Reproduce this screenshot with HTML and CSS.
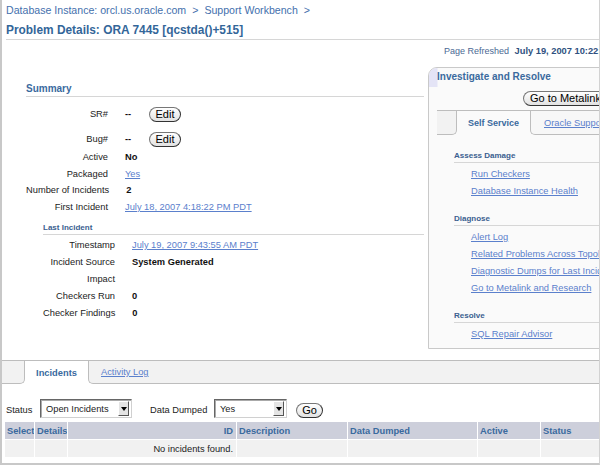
FILE: index.html
```html
<!DOCTYPE html>
<html lang="en">
<head>
<meta charset="utf-8">
<title>Problem Details</title>
<link rel="stylesheet" href="styles.css">
</head>
<body>
<div class="frame">
  <div class="crumbs"><a class="crumb">Database Instance: orcl.us.oracle.com</a><span class="sep">&gt;</span><a class="crumb">Support Workbench</a><span class="sep">&gt;</span></div>
  <h1 class="title">Problem Details: ORA 7445 [qcstda()+515]</h1>

  <div class="main">
    <div class="left">
      <h2 class="sec-head">Summary</h2>
      <div class="rows">
        <div class="row btnrow"><span class="lbl">SR#</span><span class="val dash">--</span><button class="pill edit">Edit</button></div>
        <div class="row btnrow"><span class="lbl">Bug#</span><span class="val dash">--</span><button class="pill edit">Edit</button></div>
        <div class="row"><span class="lbl">Active</span><span class="val">No</span></div>
        <div class="row"><span class="lbl">Packaged</span><a class="val link">Yes</a></div>
        <div class="row"><span class="lbl">Number of Incidents</span><span class="val">2</span></div>
        <div class="row"><span class="lbl">First Incident</span><a class="val link">July 18, 2007 4:18:22 PM PDT</a></div>
      </div>
      <div class="last">
        <h3 class="sub-head">Last Incident</h3>
        <div class="rows2">
          <div class="row2"><span class="lbl2">Timestamp</span><a class="val link">July 19, 2007 9:43:55 AM PDT</a></div>
          <div class="row2"><span class="lbl2">Incident Source</span><span class="val">System Generated</span></div>
          <div class="row2"><span class="lbl2">Impact</span><span class="val"></span></div>
          <div class="row2"><span class="lbl2">Checkers Run</span><span class="val">0</span></div>
          <div class="row2"><span class="lbl2">Checker Findings</span><span class="val">0</span></div>
        </div>
      </div>
    </div>

    <div class="right">
      <div class="refreshed">Page Refreshed <b>July 19, 2007 10:22:53 AM PDT</b></div>
      <div class="panel">
        <div class="panel-head">Investigate and Resolve</div>
        <div class="panel-btn"><button class="pill metalink">Go to Metalink</button></div>
        <div class="tabs ptabs">
          <div class="tab-gap"></div>
          <div class="tab-on">Self Service</div>
          <div class="tab-rest"><a class="link">Oracle Support</a></div>
        </div>
        <div class="panel-body">
          <div class="psec">
            <h4 class="sub-head">Assess Damage</h4>
            <ul class="plinks">
              <li><a class="link">Run Checkers</a></li>
              <li><a class="link">Database Instance Health</a></li>
            </ul>
          </div>
          <div class="psec">
            <h4 class="sub-head">Diagnose</h4>
            <ul class="plinks">
              <li><a class="link">Alert Log</a></li>
              <li><a class="link">Related Problems Across Topology</a></li>
              <li><a class="link">Diagnostic Dumps for Last Incident</a></li>
              <li><a class="link">Go to Metalink and Research</a></li>
            </ul>
          </div>
          <div class="psec">
            <h4 class="sub-head">Resolve</h4>
            <ul class="plinks">
              <li><a class="link">SQL Repair Advisor</a></li>
            </ul>
          </div>
        </div>
      </div>
    </div>
  </div>

  <div class="tabs btabs">
    <div class="tab-gap"></div>
    <div class="tab-on">Incidents</div>
    <div class="tab-rest"><a class="link">Activity Log</a></div>
  </div>

  <div class="filters">
    <span class="flbl status">Status</span>
    <div class="sel sel-status"><span class="sel-text">Open Incidents</span><span class="sel-arrow"></span></div>
    <span class="flbl dumped">Data Dumped</span>
    <div class="sel sel-dumped"><span class="sel-text">Yes</span><span class="sel-arrow"></span></div>
    <button class="pill go">Go</button>
  </div>

  <table class="grid">
    <colgroup>
      <col class="c-sel"><col class="c-det"><col class="c-id"><col class="c-desc"><col class="c-dd"><col class="c-act"><col class="c-st">
    </colgroup>
    <thead>
      <tr><th>Select</th><th>Details</th><th class="r">ID</th><th>Description</th><th>Data Dumped</th><th>Active</th><th>Status</th></tr>
    </thead>
    <tbody>
      <tr><td></td><td></td><td class="r">No incidents found.</td><td></td><td></td><td></td><td></td></tr>
    </tbody>
  </table>
</div>
</body>
</html>
```
FILE: styles.css
```css
* { box-sizing: border-box; }
body { margin: 0; background: #fff; font-family: "Liberation Sans", Arial, sans-serif; color: #222; }
h1, h2, h3, h4, ul { margin: 0; padding: 0; }
ul { list-style: none; }

.frame {
  width: 600px; height: 465px;
  border-left: 2px solid #c8c8c8;
  border-right: 1px solid #d2d2d2;
  border-bottom: 2px solid #c8c8c8;
  overflow: hidden;
}

.crumbs { padding: 3px 0 0 4px; font-size: 10.6px; line-height: 14px; color: #4470ad; white-space: nowrap; }
.crumbs .sep { margin: 0 6px; }

.title {
  margin: 5px 0 0 4px; padding-bottom: 1px;
  font-size: 11.9px; line-height: 16px; font-weight: bold; color: #336699;
  border-bottom: 1px solid #d6d6d6; white-space: nowrap;
}

.main { display: flex; }
.left { flex: 0 0 426px; padding: 42px 4px 0 24px; }
.right { flex: 0 0 280px; }

.sec-head {
  font-size: 10px; line-height: 14px; font-weight: bold; color: #3a6a9e;
  border-bottom: 1px solid #d6d6d6;
}
.sub-head {
  font-size: 8px; line-height: 12px; font-weight: bold; color: #3a6090;
  border-bottom: 1px solid #d6d6d6; white-space: nowrap;
}

.link { color: #5b80cc; text-decoration: underline; white-space: nowrap; }

.rows { margin-top: 7px; }
.row { display: flex; align-items: center; height: 16.5px; font-size: 9.3px; }
.row.btnrow { height: 20px; }
.row.btnrow + .row.btnrow { margin-top: 5px; }
.lbl { flex: 0 0 82px; text-align: right; white-space: nowrap; }
.val { margin-left: 17px; font-weight: bold; color: #111; white-space: nowrap; }
a.val { font-weight: normal; color: #5b80cc; }
.dash { width: 24px; }

.last { margin: 7px 0 0 17px; }
.rows2 { margin-top: 1.5px; }
.row2 { display: flex; align-items: center; height: 17px; font-size: 9.3px; }
.lbl2 { flex: 0 0 72px; text-align: right; white-space: nowrap; }

.pill {
  font-family: "Liberation Sans", Arial, sans-serif;
  font-size: 11px; line-height: 13px; height: 15px; padding: 0 6px;
  color: #000; border: 1px solid #555; border-color: #777 #333 #333 #777;
  border-radius: 8px; background: linear-gradient(#ffffff, #e2e2e2);
  white-space: nowrap;
}
.edit { width: 32px; padding: 0; }

.refreshed { margin: 5px 0 0 16px; font-size: 9px; line-height: 13px; color: #4b6994; white-space: nowrap; }
.refreshed b { color: #2f5180; margin-left: 3px; font-size: 9.3px; }

.panel {
  margin-top: 9px; border: 1px solid #c9c9c9; border-top-left-radius: 9px;
  background: #fafafa; padding-bottom: 5px;
}
.panel-head {
  padding: 1px 0 3px 8px; border-top-left-radius: 8px;
  font-size: 10px; line-height: 15px; font-weight: bold; color: #3a6a9e;
  background: linear-gradient(90deg, #e4e4f6 0, #e4e4f6 8px, #fafafa 9px);
}
.panel-btn { padding: 1px 0 0 94px; }
.metalink { padding: 0 6px; }

.tabs { display: flex; border-top: 1px solid #bdbdbd; }
.tab-gap { border-right: 1px solid #bdbdbd; border-bottom: 1px solid #bdbdbd; border-bottom-right-radius: 5px; background: #f2f2f2; }
.tab-on { display: flex; align-items: center; justify-content: center; font-size: 9.3px; font-weight: bold; color: #3a6a9e; }
.tab-rest {
  flex: 1; display: flex; align-items: center;
  border-left: 1px solid #bdbdbd; border-bottom: 1px solid #bdbdbd; border-bottom-left-radius: 5px;
  background: #f2f2f2; font-size: 9.3px;
}

.ptabs { margin: 4px 0 0 8px; height: 25px; }
.ptabs .tab-gap { flex: 0 0 20px; }
.ptabs .tab-on { flex: 0 0 73px; font-size: 9px; }
.ptabs .tab-rest { padding-left: 13px; background: #f7f7f7; }

.panel-body { padding: 15px 0 0 25px; }
.psec + .psec { margin-top: 13px; }
.plinks { padding: 3px 0 0 17px; }
.plinks li { font-size: 9.3px; line-height: 17px; white-space: nowrap; }

.btabs { margin-top: 11px; height: 24px; width: 640px; }
.btabs .tab-gap { flex: 0 0 23px; }
.btabs .tab-on { flex: 0 0 63px; }
.btabs .tab-rest { padding-left: 12px; }

.filters { display: flex; align-items: center; height: 19px; margin: 15px 0 3px 4px; font-size: 9.3px; }
.flbl { white-space: nowrap; padding-top: 2px; }
.status { flex: 0 0 34px; }
.dumped { flex: 0 0 64px; margin-left: 18px; }
.sel {
  display: flex; align-items: center; height: 19px;
  border: 1px solid #888; border-color: #666 #d0d0d0 #d0d0d0 #666;
  box-shadow: inset 1px 1px 0 #aaa; background: #fff; padding: 0 2px 0 5px;
}
.sel-status { flex: 0 0 92px; }
.sel-dumped { flex: 0 0 73px; }
.sel-text { flex: 1; white-space: nowrap; }
.sel-arrow {
  position: relative; width: 11px; height: 15px;
  background: #e4e4e4; border: 1px solid; border-color: #fff #555 #555 #fff;
}
.sel-arrow::after {
  content: ""; position: absolute; left: 1.5px; top: 4.5px;
  border-left: 3.5px solid transparent; border-right: 3.5px solid transparent; border-top: 4px solid #000;
}
.go { margin-left: 9px; width: 27px; padding: 0; margin-top: 3px; }

.grid { margin-left: 2px; border-collapse: separate; border-spacing: 1px; table-layout: fixed; width: 648px; font-size: 9.3px; }
.c-sel { width: 29px; } .c-det { width: 32px; } .c-id { width: 168px; } .c-desc { width: 110px; }
.c-dd { width: 129px; } .c-act { width: 62px; } .c-st { width: 110px; }
.grid th {
  height: 17px; padding: 0 0 0 2px; text-align: left; background: #cdcfdb;
  color: #3a6a9e; font-weight: bold; white-space: nowrap; overflow: hidden;
}
.grid td { height: 17px; padding: 0 0 0 2px; background: #f1f1f1; white-space: nowrap; }
.grid .r { text-align: right; padding-right: 3px; }
```
